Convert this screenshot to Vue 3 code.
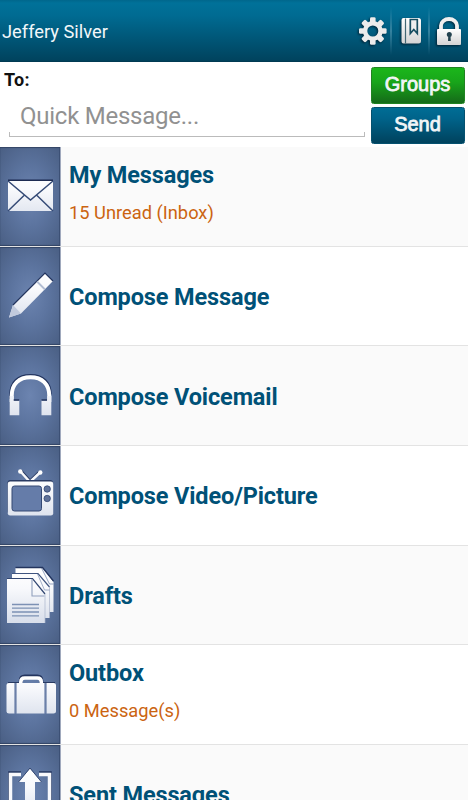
<script setup>
const rows = [
  { icon: 'mail', title: 'My Messages', sub: '15 Unread (Inbox)' },
  { icon: 'pencil', title: 'Compose Message' },
  { icon: 'phones', title: 'Compose Voicemail' },
  { icon: 'tv', title: 'Compose Video/Picture' },
  { icon: 'docs', title: 'Drafts' },
  { icon: 'case', title: 'Outbox', sub: '0 Message(s)' },
  { icon: 'sent', title: 'Sent Messages' },
]
</script>

<template>
  <div class="screen">
    <header class="bar">
      <span class="user">Jeffery Silver</span>
      <svg class="tools" width="118" height="62" viewBox="350 0 118 62">
        <defs>
          <linearGradient id="metal" x1="0" y1="0" x2="0" y2="1">
            <stop offset="0" stop-color="#fff" />
            <stop offset="1" stop-color="#d4d4d4" />
          </linearGradient>
          <linearGradient id="sep" x1="0" y1="0" x2="0" y2="1">
            <stop offset="0" stop-color="#8cc0d4" stop-opacity="0" />
            <stop offset=".5" stop-color="#8cc0d4" stop-opacity=".75" />
            <stop offset="1" stop-color="#8cc0d4" stop-opacity="0" />
          </linearGradient>
        </defs>
        <rect x="390.5" y="7" width="1" height="48" fill="url(#sep)" />
        <rect x="428.5" y="7" width="1" height="48" fill="url(#sep)" />
        <g class="shade">
          <g fill="#ececec">
            <rect v-for="n in 8" :key="n" x="370" y="17.2" width="5.600" height="7" rx="1.4" :transform="`rotate(${n * 45} 372.8 31)`" />
          </g>
          <circle cx="372.8" cy="31" r="7.700" fill="none" stroke="#ececec" stroke-width="4.4" />
          <path d="M403.500 18h15a2.500 2.500 0 0 1 2.500 2.500v20.500a2.500 2.500 0 0 1-2.500 2.500h-15a2 2 0 0 1-2-2V20a2 2 0 0 1 2-2z" fill="url(#metal)" />
          <path d="M405.500 18.500v25" stroke="#426673" stroke-width="1.200" />
          <path d="M410.300 19.500h7v14l-3.500-4-3.500 4z" fill="#eee" stroke="#174e61" stroke-width="1.700" />
          <path d="M441 30v-4.500a8 6.500 0 0 1 16 0v4.500" fill="none" stroke="#f0f0f0" stroke-width="3.800" />
          <rect x="437" y="29" width="24" height="16" rx="1" fill="url(#metal)" />
          <circle cx="449.300" cy="34.500" r="2.500" fill="#24434f" />
          <path d="M448.300 35h2.200l.3 6h-2.800z" fill="#24434f" />
        </g>
      </svg>
    </header>

    <section class="quick">
      <div class="entry">
        <label>To:</label>
        <div class="field">Quick Message...</div>
      </div>
      <div class="actions">
        <button class="btn green"><span>Groups</span></button>
        <button class="btn blue"><span>Send</span></button>
      </div>
    </section>

    <main class="list">
      <div v-for="r in rows" :key="r.icon" class="row">
        <div class="tile">
          <svg width="60" height="98" viewBox="0 0 60 98">
            <defs>
              <linearGradient :id="'g' + r.icon" x1="0" y1="25" x2="0" y2="75" gradientUnits="userSpaceOnUse">
                <stop offset="0" stop-color="#fff" />
                <stop offset=".35" stop-color="#f8f9fc" />
                <stop offset="1" stop-color="#d9dfeb" />
              </linearGradient>
            </defs>
            <g v-if="r.icon === 'mail'">
              <path d="M8 33.500h45v30.500H8z" :fill="`url(#g${r.icon})`" />
              <path d="M8 34L30.500 53 53 34M8 64l16-15.500M53 64L37 48.500" fill="none" stroke="#344a76" stroke-width="1.500" />
              <path d="M8 33.200h45" stroke="#1d2b52" stroke-width="1.400" />
            </g>
            <g v-else-if="r.icon === 'pencil'">
              <path d="M13 58L45 26l8 8-32 32.500L9 70.500z" :fill="`url(#g${r.icon})`" />
              <path d="M13 58l8 8.500-12 4z" fill="#c1cadd" />
              <path d="M13 58L45 26l8 8" fill="none" stroke="#23345e" stroke-width="1.200" />
              <path d="M37 34.500l8 8" stroke="#b2bdd2" stroke-width="1.800" />
            </g>
            <g v-else-if="r.icon === 'phones'">
              <path d="M10 53v-4.500C10 36 18 28.700 30.500 28.700S51 36 51 48.500" fill="none" stroke="#23345e" stroke-width="1.500" />
              <path d="M11.700 56v-6c0-12 7.300-18.700 18.800-18.700S49.300 38 49.300 50v6" fill="none" stroke="#fff" stroke-width="4" />
              <path d="M9.700 50h4v4.500h5.600v14.700H9.700zM51.300 50h-4v4.500h-5.800v14.700h9.800z" :fill="`url(#g${r.icon})`" />
              <path d="M13.700 54h5.500M41.500 54h5.500" stroke="#23345e" stroke-width="1.300" />
            </g>
            <g v-else-if="r.icon === 'tv'">
              <path d="M20.500 24.500L30 35l10-9.500" fill="none" stroke="#293a62" stroke-width="3" />
              <path d="M20.500 25.500L30 36l10-9.500" fill="none" stroke="#f8f9fc" stroke-width="2.500" />
              <circle cx="20.300" cy="25.500" r="2.200" fill="#fff" />
              <circle cx="40.300" cy="26.500" r="2.200" fill="#fff" />
              <rect x="7.500" y="34" width="45.500" height="34" rx="3" fill="#293a62" />
              <rect x="7.800" y="35.500" width="45.400" height="34" rx="2.300" :fill="`url(#g${r.icon})`" />
              <rect x="12" y="40" width="29.500" height="25" rx="2.500" fill="#657ca9" stroke="#344873" stroke-width="1" />
              <circle cx="47.200" cy="43" r="3.200" fill="#607299" stroke="#344873" stroke-width=".8" />
              <circle cx="47.200" cy="52.500" r="3.200" fill="#607299" stroke="#344873" stroke-width=".8" />
            </g>
            <g v-else-if="r.icon === 'docs'">
              <path d="M15.500 22h27l11 14v30h-38z" :fill="`url(#g${r.icon})`" />
              <path d="M15.500 21.500h27L53.500 35" fill="none" stroke="#23345e" stroke-width="1.300" />
              <path d="M41.500 22l8 16h4" fill="none" stroke="#6b7fa7" stroke-width=".7" />
              <path d="M12 28h26l11.500 13v31H12z" :fill="`url(#g${r.icon})`" />
              <path d="M12 27.500h26L49.500 41" fill="none" stroke="#405580" stroke-width="1.200" />
              <path d="M49.500 41v31" stroke="#aab5cb" stroke-width=".7" />
              <path d="M37.500 28l7 16h5" fill="none" stroke="#7f90b3" stroke-width=".7" />
              <path d="M7 33h25l13 15v29H7z" :fill="`url(#g${r.icon})`" />
              <path d="M7 32.500h25.500L45 48" fill="none" stroke="#334772" stroke-width="1.200" />
              <path d="M32 33v17h12.500" fill="none" stroke="#91a0bd" stroke-width="1.100" />
              <path d="M45 48v29" stroke="#aab5cb" stroke-width=".7" />
              <path d="M12 58.500h27M12 62.200h27M12 66h27M12 69.800h27" stroke="#7c91b4" stroke-width="1.300" />
            </g>
            <g v-else-if="r.icon === 'case'">
              <path d="M20.800 39v-3.500q0-4 4-4h12.500q4 0 4 4V39" fill="none" stroke="#23345e" stroke-width="4" />
              <path d="M20.800 40v-3q0-4 4-4h12.500q4 0 4 4v3" fill="none" stroke="#fff" stroke-width="3.600" />
              <path d="M9 38H14.500v30.500H9q-2.500 0-2.500-2V40q0-2 2.500-2zM16.500 38h28v30.500h-28zM46.500 38h7q2.500 0 2.500 2v26.500q0 2-2.500 2h-7z" :fill="`url(#g${r.icon})`" />
              <path d="M8 37.500h11M43 37.500h12" stroke="#293a62" />
              <path d="M15.500 38v30.500M45.500 38v30.500" stroke="#6b7fa8" stroke-width="1.300" />
            </g>
            <g v-else>
              <path d="M21 27H9v50h42V27H39" fill="none" stroke="#23345e" stroke-width="1.500" />
              <path d="M21 29.500H10.500V75h39V29.500H39" fill="none" stroke="#f8f9fc" stroke-width="3.500" />
              <path d="M30 23.500L41.500 37H35v30H25V37h-6.500z" :fill="`url(#g${r.icon})`" />
              <path d="M18.500 37L30 23l11.500 14" fill="none" stroke="#344873" />
            </g>
          </svg>
        </div>
        <div class="copy">
          <div class="title">{{ r.title }}</div>
          <div v-if="r.sub" class="sub">{{ r.sub }}</div>
        </div>
      </div>
    </main>
  </div>
</template>

<style>
body {
  margin: 0;
  overflow: hidden;
}
</style>

<style scoped>
.screen {
  width: 468px;
  height: 800px;
  overflow: hidden;
  background: #fff;
  font-family: Roboto, sans-serif;
}
.bar {
  height: 62px;
  box-sizing: border-box;
  display: flex;
  align-items: center;
  justify-content: space-between;
  background: linear-gradient(#00678c 0, #007199 3px, #006b92 25%, #00435e 97%, #00364e);
}
.user {
  padding: 1px 0 0 2px;
  font-size: 18.3px;
  color: #f2f7fa;
}
.tools {
  display: block;
}
.shade {
  filter: drop-shadow(-1px 1px 1px rgba(0, 20, 35, 0.75));
}
.quick {
  height: 85px;
  display: flex;
}
.entry {
  width: 370px;
  display: flex;
  flex-direction: column;
}
label {
  padding: 8px 0 0 4px;
  line-height: 20px;
  font-size: 18px;
  font-weight: 700;
  letter-spacing: 0.3px;
  color: #111;
}
.field {
  position: relative;
  width: 345px;
  height: 36px;
  margin: 9px 0 0 9px;
  padding-left: 11px;
  line-height: 35px;
  font-size: 24px;
  letter-spacing: -0.25px;
  color: #919191;
}
.field::after {
  content: '';
  position: absolute;
  left: 0;
  right: 0;
  bottom: -2px;
  height: 4px;
  border: 1px solid #bbb;
  border-top: 0;
}
.actions {
  padding: 5px 0 0 0.5px;
  display: flex;
  flex-direction: column;
  gap: 3px;
}
.btn {
  width: 94px;
  height: 37px;
  padding: 0 0 2px;
  border-radius: 2.500px;
  font: 400 20px/33px "Liberation Sans", sans-serif;
  -webkit-text-stroke: 0.8px #f2f5f7;
  color: #f2f5f7;
}
.green {
  border: 1px solid #208321;
  background: linear-gradient(#1bb61b, #18a51a 40%, #156a19);
}
.blue {
  border: 1px solid #05516f;
  background: linear-gradient(#006d95, #00638a 30%, #00425d);
}
.list {
  display: flex;
  flex-direction: column;
}
.row {
  height: 99.66px;
  flex: none;
  box-sizing: border-box;
  display: flex;
  border-bottom: 1px solid #e3e3e3;
  background: #fff;
}
.row:nth-child(odd) {
  background: #fafafa;
}
.tile {
  width: 61px;
  flex: none;
  box-sizing: border-box;
  overflow: hidden;
  border-right: 1px solid #a0a9bd;
  background: radial-gradient(ellipse 43px 66px at 50% 50%, #6c84b0, #5c749f 45%, #4a5f84 100%);
  box-shadow: inset 0 1px 1px #334565, inset 0 -1px 1px #334565, inset -1px 0 0 #405479;
}
.tile svg {
  display: block;
}
.copy {
  flex: 1;
  padding-left: 8px;
  display: flex;
  flex-direction: column;
  justify-content: center;
}
.title {
  line-height: 28px;
  font-size: 23.5px;
  font-weight: 700;
  letter-spacing: -0.13px;
  color: #005177;
  white-space: nowrap;
  padding-top: 2.4px;
}
.sub {
  margin-top: 12px;
  margin-bottom: 10px;
  line-height: 24px;
  font-size: 18.3px;
  color: #cb6411;
}
</style>
